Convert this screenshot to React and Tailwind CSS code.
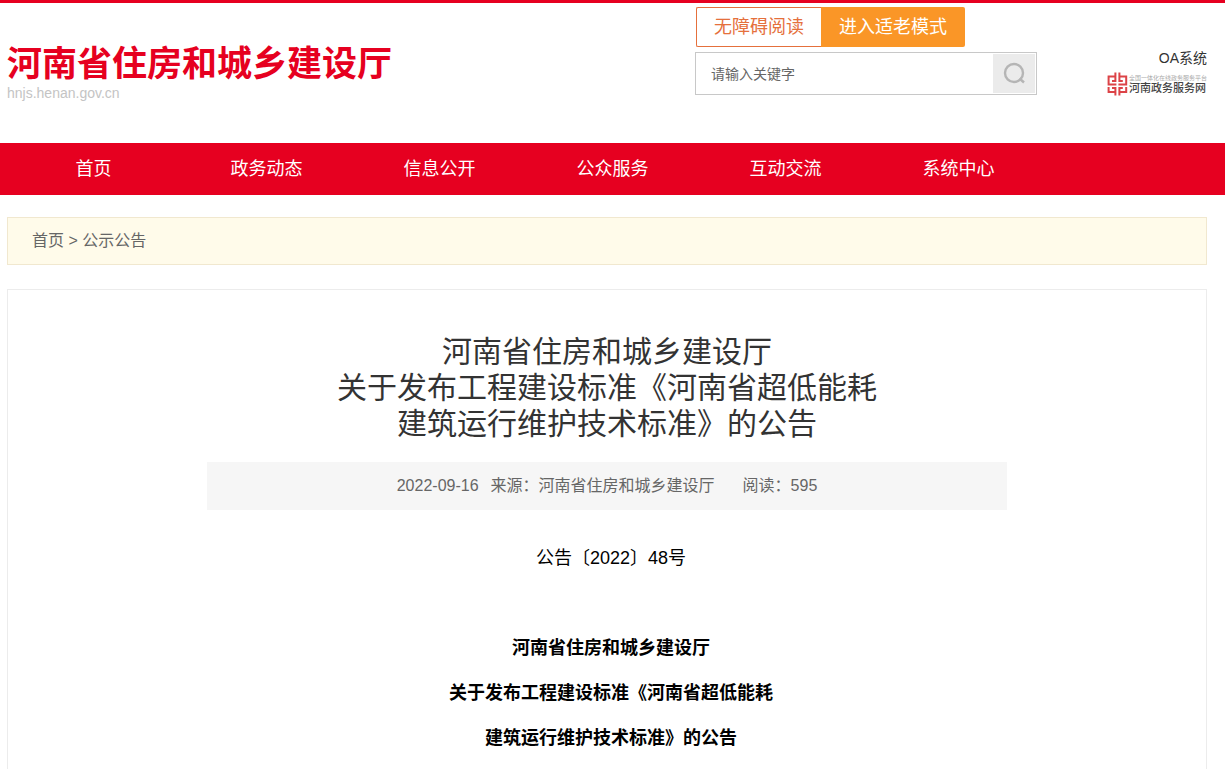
const NAV_ITEMS = ['首页', '政务动态', '信息公开', '公众服务', '互动交流', '系统中心']

const TITLE_LINES = [
  '河南省住房和城乡建设厅',
  '关于发布工程建设标准《河南省超低能耗',
  '建筑运行维护技术标准》的公告'
]

function ServiceLogo() {
  return (
    <svg width="21" height="24" viewBox="0 0 21 24" fill="none" stroke="#dc4347" strokeWidth="2" aria-hidden="true">
      <path d="M8.4 0.5v8.6H5" />
      <path d="M12.4 0.5v8.6h3.4" />
      <path d="M8.4 4.6H1.6v7.8h7.8" />
      <path d="M12.4 4.6h6.8v7.8h-7.8" />
      <path d="M8.4 23.5v-7.4H5" />
      <path d="M12.4 23.5v-7.4h3.4" />
      <path d="M1.6 15v5h6.8" />
      <path d="M19.2 15v5h-6.8" />
    </svg>
  )
}

function SearchIcon() {
  return (
    <svg width="24" height="24" viewBox="0 0 24 24" fill="none" stroke="#b5b5b5" strokeWidth="2.4" aria-hidden="true">
      <circle cx="12" cy="11" r="9" />
      <path d="M17.5 16.5l4.5 4" />
    </svg>
  )
}

function Header() {
  return (
    <header className="flex h-[140px] pl-[7px] pr-[18px]">
      <div className="flex-1 pt-[38px]">
        <h1 className="text-[35px] leading-[46px] font-bold text-[#e60020] whitespace-nowrap">河南省住房和城乡建设厅</h1>
        <p className="text-sm leading-3 text-[#c4c4c4]">hnjs.henan.gov.cn</p>
      </div>

      <div className="w-[342px] pt-1">
        <div className="flex h-10 pl-px text-lg">
          <button type="button" className="w-[125px] rounded-l-xs border border-r-0 border-[#e5703c] text-[#e5703c]">
            无障碍阅读
          </button>
          <button type="button" className="w-36 rounded-r-xs bg-[#fa9627] text-white">
            进入适老模式
          </button>
        </div>
        <form className="mt-[5px] flex h-[43px] border border-[#c8c8c8] p-px" onSubmit={(e) => e.preventDefault()}>
          <input
            type="text"
            aria-label="请输入关键字"
            placeholder="请输入关键字"
            className="min-w-0 flex-1 pl-3.5 text-sm text-gray-700 outline-none placeholder:text-[#666]"
          />
          <button type="submit" aria-label="搜索" className="flex w-[42px] items-center justify-center bg-[#ebebeb]">
            <SearchIcon />
          </button>
        </form>
      </div>

      <div className="flex w-[170px] flex-col items-end pt-[45px]">
        <a href="#" className="text-sm leading-5 text-[#333]">OA系统</a>
        <a href="#" className="mt-1 flex items-center gap-px whitespace-nowrap">
          <ServiceLogo />
          <span className="flex flex-col">
            <span className="text-[6px] leading-2 text-[#aaa]">全国一体化在线政务服务平台</span>
            <span className="text-[11px] leading-3 font-medium text-[#444]">河南政务服务网</span>
          </span>
        </a>
      </div>
    </header>
  )
}

function App() {
  return (
    <div className="flex min-h-screen flex-col border-t-3 border-[#e60020] bg-white font-['Liberation_Sans','Noto_Sans_CJK_SC',sans-serif]">
      <Header />

      <nav className="flex bg-[#e60020] px-[7px]">
        {NAV_ITEMS.map(item => (
          <a key={item} href="#" className="w-[173px] text-center text-lg leading-[52px] text-white">{item}</a>
        ))}
      </nav>

      <main className="flex flex-1 flex-col pl-[7px] pr-[18px] pt-[22px]">
        <div className="border border-[#f1e8cf] bg-[#fffbea] px-6 text-base leading-[46px] text-[#666]">
          <a href="#">首页</a> &gt; <a href="#">公示公告</a>
        </div>

        <article className="mt-6 flex-1 border border-b-0 border-[#ececec] pt-11">
          <h2 className="text-center text-3xl leading-9 text-[#333]">
            {TITLE_LINES.map(line => (
              <span key={line} className="block">{line}</span>
            ))}
          </h2>

          <div className="mx-auto mt-5 flex h-12 max-w-[800px] items-center justify-center bg-[#f6f6f6] text-base text-[#666]">
            <span>2022-09-16</span>
            <span className="ml-3">来源：河南省住房和城乡建设厅</span>
            <span className="ml-7">阅读：595</span>
          </div>

          <div className="mt-[26px] pl-2 text-center text-lg leading-[45px] text-black">
            <p>公告〔2022〕48号</p>
            <div className="mt-[45px] font-bold">
              {TITLE_LINES.map(line => (
                <p key={line}>{line}</p>
              ))}
            </div>
          </div>
        </article>
      </main>
    </div>
  )
}

export default App
